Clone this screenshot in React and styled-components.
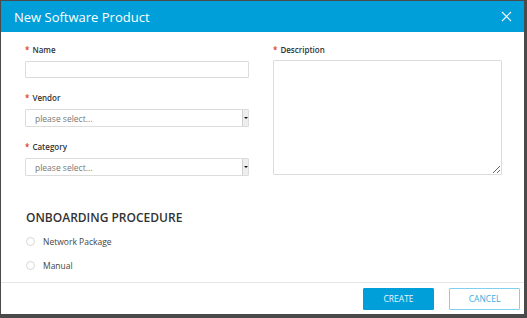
import React from 'react'
import styled, {createGlobalStyle} from 'styled-components'

const Global = createGlobalStyle`
  html, body {
    margin: 0;
    padding: 0;
    background: #4a4a4a;
    font-family: "Open Sans", "Noto Sans", sans-serif;
  }
`

const Dialog = styled.div`
  margin: 1px 0 0 1px;
  width: 523px;
  height: 313px;
  background: #fff;
  display: flex;
  flex-direction: column;
`

const Header = styled.div`
  height: 31px;
  background: #009fda;
  display: flex;
  align-items: center;
  justify-content: space-between;
  padding: 0 12px 0 13px;
`

const Title = styled.div`
  color: #fff;
  font-size: 13px;
  line-height: 16px;
`

const Close = styled.button`
  border: 0;
  background: none;
  padding: 0;
  width: 11px;
  height: 11px;
  display: flex;
  cursor: pointer;
`

const Body = styled.div`
  flex: 1;
  padding: 12px 22px 0 24px;
`

const Columns = styled.div`
  display: grid;
  grid-template-columns: 224px 229px;
  column-gap: 24px;
`

const Column = styled.div`
  display: flex;
  flex-direction: column;
`

const Field = styled.div`
  display: flex;
  flex-direction: column;
  margin-top: ${p => p.$first ? 0 : 14}px;
`

const Label = styled.label`
  font-size: 8px;
  line-height: 11px;
  font-weight: 600;
  color: #333;
  margin-bottom: ${p => p.$tight ? 5 : 6}px;
  &::before {
    content: '*';
    color: #e0312b;
    margin-right: 3px;
  }
`

const Input = styled.input`
  box-sizing: border-box;
  height: 17px;
  border: 1px solid #dcdcdc;
  border-radius: 1px;
  outline: none;
`

const Select = styled.div`
  box-sizing: border-box;
  height: 18px;
  border: 1px solid #dcdcdc;
  border-radius: 1px;
  display: flex;
  align-items: center;
  justify-content: space-between;
  padding-left: 9px;
  font-size: 8.5px;
  color: #777;
`

const Arrow = styled.span`
  width: 5px;
  align-self: stretch;
  background: #eeeeee;
  border-left: 1px solid #d0d0d0;
  display: flex;
  align-items: center;
  justify-content: center;
  &::after {
    content: '';
    border-left: 2px solid transparent;
    border-right: 2px solid transparent;
    border-top: 2px solid #111;
  }
`

const TextArea = styled.textarea`
  box-sizing: border-box;
  height: 115px;
  border: 1px solid #dcdcdc;
  border-radius: 1px;
  outline: none;
  resize: vertical;
`

const Section = styled.h2`
  margin: 34px 0 0 1px;
  font-size: 12px;
  line-height: 16px;
  font-weight: 600;
  color: #333;
`

const Options = styled.div`
  display: flex;
  flex-direction: column;
  gap: 8px;
  margin-top: 7px;
`

const Option = styled.label`
  height: 16px;
  display: flex;
  align-items: center;
  font-size: 8.5px;
  color: #444;
`

const Radio = styled.span`
  box-sizing: border-box;
  width: 9px;
  height: 9px;
  border: 1px solid #d6d6d6;
  border-radius: 50%;
  margin: 0 8px 0 1px;
`

const Footer = styled.div`
  height: 32px;
  border-top: 1px solid #e6e6e6;
  box-sizing: border-box;
  display: flex;
  justify-content: flex-end;
  align-items: center;
  gap: 15px;
  padding-right: 4px;
`

const Button = styled.button`
  box-sizing: border-box;
  width: 71px;
  height: 22px;
  font-family: inherit;
  font-size: 8.5px;
  border-radius: 1px;
  cursor: pointer;
  background: ${p => p.$primary ? '#009fda' : '#fff'};
  color: ${p => p.$primary ? '#e6f6fc' : '#3aaee0'};
  border: 1px solid ${p => p.$primary ? '#009fda' : '#7fd0ee'};
`

function SelectBox() {
    return (
        <Select>
            please select...
            <Arrow/>
        </Select>
    )
}

export default function App() {
    return (
        <>
            <Global/>
            <Dialog>
                <Header>
                    <Title>New Software Product</Title>
                    <Close aria-label="close">
                        <svg width="11" height="11" viewBox="0 0 11 11">
                            <path d="M1 1 L10 10 M10 1 L1 10" stroke="#fff" strokeWidth="1.1"/>
                        </svg>
                    </Close>
                </Header>
                <Body>
                    <Columns>
                        <Column>
                            <Field $first>
                                <Label>Name</Label>
                                <Input/>
                            </Field>
                            <Field>
                                <Label>Vendor</Label>
                                <SelectBox/>
                            </Field>
                            <Field>
                                <Label>Category</Label>
                                <SelectBox/>
                            </Field>
                        </Column>
                        <Column>
                            <Field $first>
                                <Label $tight>Description</Label>
                                <TextArea/>
                            </Field>
                        </Column>
                    </Columns>
                    <Section>ONBOARDING PROCEDURE</Section>
                    <Options>
                        <Option><Radio/>Network Package</Option>
                        <Option><Radio/>Manual</Option>
                    </Options>
                </Body>
                <Footer>
                    <Button $primary>CREATE</Button>
                    <Button>CANCEL</Button>
                </Footer>
            </Dialog>
        </>
    )
}
